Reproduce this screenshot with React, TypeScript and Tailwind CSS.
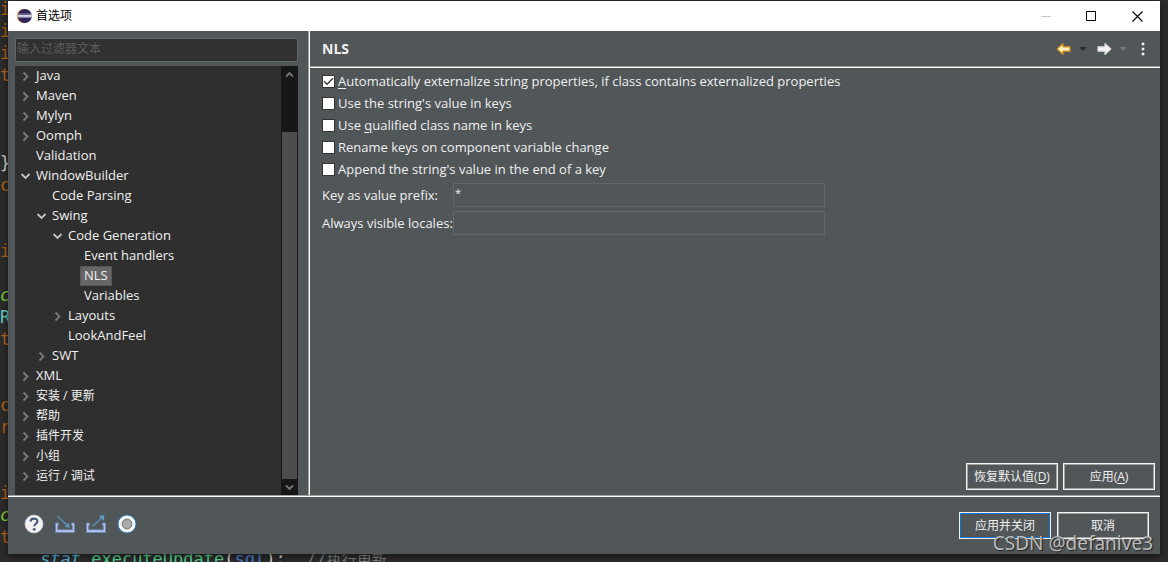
import { useState } from "react";

type Code = { text: string; tone: string };

const codeLines: Code[] = [
  { text: "i", tone: "text-[#b8621b]" },
  { text: "i", tone: "text-[#b8621b]" },
  { text: "i", tone: "text-[#b8621b]" },
  { text: "t", tone: "text-[#b8621b]" },
  { text: "", tone: "" },
  { text: "", tone: "" },
  { text: "", tone: "" },
  { text: "}", tone: "text-[#d8d8c8]" },
  { text: "c", tone: "text-[#b8621b]" },
  { text: "", tone: "" },
  { text: "", tone: "" },
  { text: "i", tone: "text-[#b8621b]" },
  { text: "", tone: "" },
  { text: "c", tone: "text-[#80d030] italic" },
  { text: "R", tone: "text-[#66d0c8]" },
  { text: "t", tone: "text-[#b8621b]" },
  { text: "", tone: "" },
  { text: "", tone: "" },
  { text: "c", tone: "text-[#b8621b]" },
  { text: "r", tone: "text-[#b8621b]" },
  { text: "", tone: "" },
  { text: "", tone: "" },
  { text: "i", tone: "text-[#b8621b]" },
  { text: "c", tone: "text-[#80d030] italic" },
  { text: "t", tone: "text-[#b8621b]" },
];

type Node = {
  label: string;
  indent: string;
  state?: "open" | "closed";
  selected?: boolean;
};

const nodes: Node[] = [
  { label: "Java", indent: "pl-1", state: "closed" },
  { label: "Maven", indent: "pl-1", state: "closed" },
  { label: "Mylyn", indent: "pl-1", state: "closed" },
  { label: "Oomph", indent: "pl-1", state: "closed" },
  { label: "Validation", indent: "pl-1" },
  { label: "WindowBuilder", indent: "pl-1", state: "open" },
  { label: "Code Parsing", indent: "pl-5" },
  { label: "Swing", indent: "pl-5", state: "open" },
  { label: "Code Generation", indent: "pl-9", state: "open" },
  { label: "Event handlers", indent: "pl-[52px]" },
  { label: "NLS", indent: "pl-[52px]", selected: true },
  { label: "Variables", indent: "pl-[52px]" },
  { label: "Layouts", indent: "pl-9", state: "closed" },
  { label: "LookAndFeel", indent: "pl-9" },
  { label: "SWT", indent: "pl-5", state: "closed" },
  { label: "XML", indent: "pl-1", state: "closed" },
  { label: "安装 / 更新", indent: "pl-1", state: "closed" },
  { label: "帮助", indent: "pl-1", state: "closed" },
  { label: "插件开发", indent: "pl-1", state: "closed" },
  { label: "小组", indent: "pl-1", state: "closed" },
  { label: "运行 / 调试", indent: "pl-1", state: "closed" },
];

const cjk = /[\u4e00-\u9fff]/;

function Editor() {
  return (
    <div
      aria-hidden="true"
      className="absolute inset-0 overflow-hidden whitespace-pre bg-[#2c2c2c] font-['DejaVu_Sans_Mono','Noto_Sans_CJK_SC',monospace] text-[17px] leading-[22px]"
    >
      <div className="-mt-[2px]">
        {codeLines.map((line, i) => (
          <div key={i} className={`h-[22px] ${line.tone}`}>
            {line.text}
          </div>
        ))}
        <div className="h-[22px] pl-10">
          <span className="italic text-[#58b8d8]">stat</span>
          <span className="text-[#d8d8d8]">.</span>
          <span className="text-[#58d890]">executeUpdate</span>
          <span className="text-[#d8d8c8]">(</span>
          <span className="text-[#5080d8]">sql</span>
          <span className="text-[#d8d8c8]">);</span>
          <span className="text-[#808080]">{"  //"}</span>
          <span className="text-[15px] text-[#808080]">执行更新</span>
        </div>
      </div>
    </div>
  );
}

function EclipseLogo() {
  return (
    <svg viewBox="0 0 16 16" className="size-4" aria-hidden="true">
      <circle cx="7.8" cy="8" r="7" fill="#e8903c" />
      <circle cx="8.8" cy="8" r="7" fill="#2c2255" />
      <path d="M2 6h13.6M1.8 9.6h13.8" stroke="#8c84ac" strokeWidth="1" />
      <path d="M1.8 6.9h14v2h-14z" fill="#f2f0f8" />
      <path d="M2.2 8h13.4" stroke="#a8a0c4" strokeWidth=".7" />
    </svg>
  );
}

function Chevron({ open }: { open: boolean }) {
  return open ? (
    <svg viewBox="0 0 13 13" className="size-[13px]" fill="none" aria-hidden="true">
      <path d="M2.5 4l4 4 4-4" stroke="#c4c4c4" strokeWidth="1.8" />
    </svg>
  ) : (
    <svg viewBox="0 0 13 13" className="size-[13px]" fill="none" aria-hidden="true">
      <path d="M4.5 2.5l4 4-4 4" stroke="#7c7c7c" strokeWidth="1.8" />
    </svg>
  );
}

function Tree() {
  return (
    <div className="flex min-h-0 flex-1 bg-[#2f2f2f]">
      <ul role="tree" aria-label="首选项" className="min-w-0 flex-1">
        {nodes.map((n) => (
          <li
            key={n.label}
            role="treeitem"
            aria-selected={!!n.selected}
            className={`flex h-5 items-center ${n.indent}`}
          >
            <span className="w-[13px]">{n.state && <Chevron open={n.state === "open"} />}</span>
            <span
              className={
                n.selected
                  ? "flex h-5 items-center border border-[#565656] bg-[#666666] px-[3px] pb-[2px]"
                  : `pl-1 ${cjk.test(n.label) ? "text-xs" : "pb-[2px]"}`
              }
            >
              {n.label}
            </span>
          </li>
        ))}
      </ul>
      <div className="flex w-[17px] flex-col bg-[#171717] px-px">
        <button type="button" aria-label="Scroll up" className="flex h-[17px] items-center justify-center">
          <svg viewBox="0 0 9 7" className="h-[7px] w-[9px]" fill="none">
            <path d="M1 5.7l3.5-3.5L8 5.7" stroke="#787878" strokeWidth="1.9" />
          </svg>
        </button>
        <div className="mt-[49px] flex-1 bg-[#4d4d4d]" />
        <button type="button" aria-label="Scroll down" className="flex h-[17px] items-center justify-center">
          <svg viewBox="0 0 9 7" className="h-[7px] w-[9px]" fill="none">
            <path d="M1 1.3l3.5 3.5L8 1.3" stroke="#787878" strokeWidth="1.9" />
          </svg>
        </button>
      </div>
    </div>
  );
}

const initialOptions = [
  { id: "auto", before: "", key: "A", after: "utomatically externalize string properties, if class contains externalized properties", on: true },
  { id: "value", before: "Use the string's value in keys", key: "", after: "", on: false },
  { id: "qualified", before: "Use ", key: "q", after: "ualified class name in keys", on: false },
  { id: "rename", before: "Rename keys on component variable change", key: "", after: "", on: false },
  { id: "append", before: "Append the string's value in the end of a key", key: "", after: "", on: false },
];

function Options() {
  const [options, setOptions] = useState(initialOptions);
  return (
    <div className="flex flex-col">
      {options.map((o) => (
        <label key={o.id} className="flex h-[22px] items-center gap-[3px]">
          <span className="grid size-[13px] shrink-0">
            <input
              type="checkbox"
              checked={o.on}
              onChange={() => setOptions(options.map((p) => (p.id === o.id ? { ...p, on: !p.on } : p)))}
              className="col-start-1 row-start-1 size-[13px] appearance-none border border-[#333333] bg-white"
            />
            {o.on && (
              <svg viewBox="0 0 13 13" className="pointer-events-none col-start-1 row-start-1 size-[13px]" fill="none">
                <path d="M2 6.3L5 9.3l6-6" stroke="#333" strokeWidth="1.3" />
              </svg>
            )}
          </span>
          <span className="whitespace-nowrap">
            {o.before}
            {o.key && <span className="underline underline-offset-2">{o.key}</span>}
            {o.after}
          </span>
        </label>
      ))}
    </div>
  );
}

function PushButton({ text, mnemonic, focused }: { text: string; mnemonic?: string; focused?: boolean }) {
  return (
    <button
      type="button"
      className={`h-[27px] w-[92px] border text-xs ${
        focused
          ? "border-[#f0f0f0] shadow-[inset_0_0_0_1px_#0a74d4]"
          : "border-[#f4f4f4] shadow-[inset_0_0_0_1px_#a0a0a0]"
      }`}
    >
      {text}
      {mnemonic && (
        <>
          (<span className="underline underline-offset-2">{mnemonic}</span>)
        </>
      )}
    </button>
  );
}

function HeaderTools() {
  return (
    <div className="flex items-center">
      <button type="button" aria-label="Back" className="flex w-5 justify-start">
        <svg viewBox="0 0 16 14" className="h-[14px] w-4">
          <path d="M1.2 7L7 1.6v3.2h7v4.4H7v3.2z" fill="#fff3c0" stroke="#d98c14" strokeWidth="1.2" strokeLinejoin="round" />
        </svg>
      </button>
      <button type="button" aria-label="Back history" className="flex w-5 justify-start">
        <svg viewBox="0 0 8 4" className="ml-[3px] h-1 w-2"><path d="M0 0h8L4 4z" fill="#2c2c2c" /></svg>
      </button>
      <button type="button" aria-label="Forward" className="flex w-5 justify-start">
        <svg viewBox="0 0 16 14" className="h-[14px] w-4">
          <path d="M14.8 7L9 1.6v3.2H2v4.4h7v3.2z" fill="#f4f4f4" stroke="#dcdcdc" strokeWidth="1.2" strokeLinejoin="round" />
        </svg>
      </button>
      <button type="button" aria-label="Forward history" className="flex w-6 justify-start">
        <svg viewBox="0 0 8 4" className="ml-[3px] h-1 w-2"><path d="M0 0h8L4 4z" fill="#73777a" /></svg>
      </button>
      <button type="button" aria-label="View menu" className="flex justify-center">
        <svg viewBox="0 0 6 16" className="h-4 w-[6px]" fill="#f4f4f4" stroke="#333" strokeWidth=".4">
          <circle cx="3" cy="3" r="1.8" />
          <circle cx="3" cy="8" r="1.8" />
          <circle cx="3" cy="13" r="1.8" />
        </svg>
      </button>
    </div>
  );
}

function FooterIcons() {
  return (
    <div className="flex items-center pb-1">
      <button type="button" aria-label="Help" className="w-[30px]">
        <svg viewBox="0 0 20 20" className="size-5">
          <circle cx="10" cy="10" r="9" fill="#f2f2f2" stroke="#c8ccd0" strokeWidth=".8" />
          <path d="M6.6 7.6c0-4 6.8-4 6.8-.3 0 2.4-3 2.5-3.1 5" fill="none" stroke="#485878" strokeWidth="2.2" />
          <circle cx="10.2" cy="15.3" r="1.4" fill="#485878" />
        </svg>
      </button>
      <button type="button" aria-label="Import" className="w-[31px]">
        <svg viewBox="0 0 22 20" className="h-5 w-[22px]" fill="none">
          <path d="M4.5 9H1.5v9.5h19V9h-3v2.4h.8v4.4H3.7v-4.4h.8z" fill="#b4c4e4" stroke="#6a84ba" strokeWidth=".9" />
          <path d="M3.5 2.2L14 12" stroke="#5794b8" strokeWidth="1.4" />
          <path d="M15.8 13.8l-5.2-.8 4.2-4.4z" fill="#5794b8" />
        </svg>
      </button>
      <button type="button" aria-label="Export" className="w-8">
        <svg viewBox="0 0 22 20" className="h-5 w-[22px]" fill="none">
          <path d="M4.5 9H1.5v9.5h19V9h-3v2.4h.8v4.4H3.7v-4.4h.8z" fill="#b4c4e4" stroke="#6a84ba" strokeWidth=".9" />
          <path d="M7.5 12.6L17 3.4" stroke="#5794b8" strokeWidth="1.4" />
          <path d="M19.4 1.2l-.6 5.6-5-5z" fill="#5fa0c4" />
        </svg>
      </button>
      <button type="button" aria-label="Oomph recorder">
        <svg viewBox="0 0 20 20" className="size-5">
          <circle cx="10" cy="10" r="9" fill="#f6f8fa" stroke="#2f78b4" strokeWidth="1" />
          <circle cx="10" cy="10" r="4.9" fill="#a4a4a4" stroke="#747474" strokeWidth="1" />
          <path d="M6 8.5h8M5.6 10.5h8.8M6.4 12.5h7.2" stroke="#b8b8b8" strokeWidth=".7" />
        </svg>
      </button>
    </div>
  );
}

export default function App() {
  return (
    <div className="relative flex h-screen min-h-[540px] flex-col px-2 pb-2 pt-px font-['Open_Sans','Noto_Sans_CJK_SC',sans-serif] text-[13px] leading-5 text-[#f0f0f0]">
      <Editor />
      <main className="relative flex min-h-0 flex-1 flex-col bg-[#515658] shadow-[0_2px_8px_rgba(0,0,0,0.6)]">
        <header className="flex h-[30px] shrink-0 items-center bg-white text-black">
          <div className="flex flex-1 items-center gap-1 pl-2 text-xs">
            <EclipseLogo />
            <h1>首选项</h1>
          </div>
          <button type="button" aria-label="Minimize" className="flex w-[46px] justify-center">
            <svg viewBox="0 0 11 11" className="size-[11px]"><path d="M0 5h10v1H0z" fill="#c8c8c8" /></svg>
          </button>
          <button type="button" aria-label="Maximize" className="flex w-[45px] justify-center">
            <svg viewBox="0 0 11 11" className="size-[11px]" fill="none"><path d="M.5.5h9v9h-9z" stroke="#000" /></svg>
          </button>
          <button type="button" aria-label="Close" className="flex w-[46px] justify-center">
            <svg viewBox="0 0 11 11" className="size-[11px]" fill="none"><path d="M.5.5l10 10M10.5.5l-10 10" stroke="#000" strokeWidth="1.1" /></svg>
          </button>
        </header>

        <div className="flex min-h-0 flex-1">
          <aside className="flex w-[301px] shrink-0 flex-col gap-1 pl-[7px] pr-[11px] pt-[7px]">
            <input
              type="text"
              aria-label="输入过滤器文本"
              placeholder="输入过滤器文本"
              className="h-6 shrink-0 border border-[#626566] bg-[#313131] pb-1 pl-px text-xs outline-none placeholder:text-[#5c5c5c]"
            />
            <Tree />
          </aside>
          <section className="flex min-w-0 flex-1 flex-col border-l border-white shadow-[-1px_0_0_#a0a0a0]">
            <div className="flex h-[37px] shrink-0 items-center justify-between border-b border-white pl-3 pr-[14px] shadow-[inset_0_-1px_0_#a0a0a0]">
              <h2 className="text-sm font-bold">NLS</h2>
              <HeaderTools />
            </div>
            <div className="flex flex-1 flex-col px-3 pt-[2px]">
              <Options />
              <div className="grid grid-cols-[131px_372px] items-center gap-y-1 pt-[3px]">
                <label htmlFor="prefix" className="whitespace-nowrap pb-px">Key as value prefix:</label>
                <input
                  id="prefix"
                  type="text"
                  defaultValue="*"
                  className="h-6 border border-[#646768] bg-transparent pb-[5px] pl-[1px] text-[11px] outline-none"
                />
                <label htmlFor="locales" className="whitespace-nowrap pb-px">Always visible locales:</label>
                <input id="locales" type="text" className="h-6 border border-[#646768] bg-transparent pb-[5px] pl-[1px] text-[11px] outline-none" />
              </div>
            </div>
            <div className="flex justify-end gap-[5px] pb-[6px] pr-[5px]">
              <PushButton text="恢复默认值" mnemonic="D" />
              <PushButton text="应用" mnemonic="A" />
            </div>
          </section>
        </div>

        <footer className="flex h-[58px] shrink-0 items-center justify-between border-t border-white pl-4 pr-[11px] shadow-[0_-1px_0_#a0a0a0]">
          <FooterIcons />
          <div className="flex gap-[6px]">
            <PushButton text="应用并关闭" focused />
            <PushButton text="取消" />
          </div>
        </footer>
      </main>
      <p className="pointer-events-none absolute bottom-[7px] right-[15px] font-['Noto_Sans',sans-serif] text-[19px] leading-6 text-[#b8babb] [text-shadow:1px_1px_1px_#222]">
        CSDN @defanive3
      </p>
    </div>
  );
}
